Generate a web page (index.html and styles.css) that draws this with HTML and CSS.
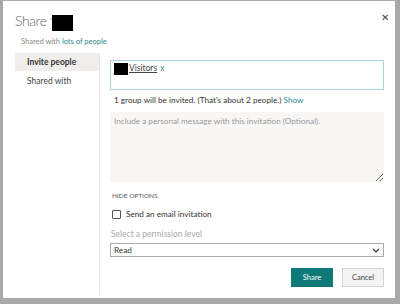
FILE: index.html
```html
<!DOCTYPE html>
<html lang="en">
<head>
    <meta charset="UTF-8">
    <title>Share</title>
    <link rel="stylesheet" href="styles.css">
</head>
<body>
    <div class="dialog">
        <!-- header -->
        <div class="header">
            <h1 class="title">Share <span class="tick">'</span><span class="redact title-redact"></span></h1>
            <span class="close">&#x2715;</span>
        </div>
        <p class="subtitle">Shared with <a class="link">lots of people</a></p>

        <div class="body">
            <!-- left nav -->
            <div class="nav">
                <div class="nav-item active">Invite people</div>
                <div class="nav-item">Shared with</div>
            </div>

            <!-- right content -->
            <div class="main">
                <div class="people-box">
                    <span class="redact chip-redact"></span><span class="chip">Visitors</span> <span class="chip-x">x</span>
                </div>
                <p class="invite-info">1 group will be invited. (That's about 2 people.) <a class="link">Show</a></p>
                <textarea class="message" placeholder="Include a personal message with this invitation (Optional)."></textarea>

                <div class="options-toggle">HIDE OPTIONS</div>
                <label class="check-row">
                    <span class="checkbox"></span>
                    Send an email invitation
                </label>
                <div class="perm-label">Select a permission level</div>
                <div class="select">
                    <span>Read</span>
                    <svg class="chevron" width="8" height="5" viewBox="0 0 8 5"><path d="M1 1 L4 4 L7 1" fill="none" stroke="#333" stroke-width="1.2"/></svg>
                </div>

                <div class="buttons">
                    <button class="btn btn-primary">Share</button>
                    <button class="btn">Cancel</button>
                </div>
            </div>
        </div>
    </div>
</body>
</html>
```

FILE: styles.css
```css
* {
    margin: 0;
    padding: 0;
    box-sizing: border-box;
}

body {
    font-family: Lato, "Open Sans", sans-serif;
    background-color: #a9a9a9;
    padding: 1px 5px 6px 3px;
    width: 400px;
    height: 304px;
    overflow: hidden;
}

.dialog {
    background-color: #ffffff;
    height: 297px;
    padding: 9px 11px 0 12px;
    display: flex;
    flex-direction: column;
}

.header {
    display: flex;
    justify-content: space-between;
    align-items: flex-start;
}

.title {
    font-weight: 300;
    font-size: 14px;
    letter-spacing: -0.4px;
    color: #666;
    display: flex;
    align-items: center;
    gap: 0;
    line-height: 22px;
}

.tick {
    font-size: 10px;
    color: #666;
    margin-left: 3px;
    margin-right: 1px;
}

.redact {
    display: inline-block;
    background-color: #000;
}

.title-redact {
    width: 21px;
    height: 16px;
    margin-top: 3px;
}

.close {
    font-size: 10px;
    color: #444;
    margin-top: 1px;
    margin-right: -5px;
}

.subtitle {
    font-size: 7.5px;
    color: #888;
    margin-top: 5px;
    margin-left: 6px;
}

.link {
    color: #2b8a8e;
    text-decoration: none;
}

.body {
    display: flex;
    flex: 1;
    margin-top: 7px;
    padding-bottom: 4px;
}

.nav {
    width: 85px;
    border-right: 1px solid #e6e6e6;
    font-size: 8.5px;
    color: #444;
}

.nav-item {
    padding: 4px 0 3px 12px;
    height: 18px;
    margin-bottom: 1px;
}

.nav-item.active {
    background-color: #f0eeec;
    color: #333;
    font-weight: 700;
}

.main {
    flex: 1;
    padding: 7px 0 0 10px;
    display: flex;
    flex-direction: column;
}

.people-box {
    height: 30px;
    border: 1px solid #a6d8da;
    padding: 2px 3px;
    font-size: 8.5px;
    color: #333;
    display: flex;
    align-items: flex-start;
}

.chip-redact {
    width: 14px;
    height: 12px;
}

.chip {
    text-decoration: underline;
    color: #444;
    margin-left: 1px;
}

.chip-x {
    color: #2b8a8e;
    margin-left: 3px;
}

.invite-info {
    font-size: 8.2px;
    color: #333;
    margin: 4px 0 0 4px;
    line-height: 12px;
}

.message {
    margin-top: 6px;
    height: 70px;
    border: none;
    background-color: #f8f7f6;
    font-family: inherit;
    font-size: 8.2px;
    padding: 4px 4px;
    resize: vertical;
    color: #333;
}

.message::placeholder {
    color: #999;
}

.options-toggle {
    font-size: 6.5px;
    color: #555;
    margin: 10px 0 0 2px;
}

.check-row {
    display: flex;
    align-items: center;
    gap: 5px;
    font-size: 8.2px;
    color: #333;
    margin: 10px 0 0 2px;
}

.checkbox {
    width: 9px;
    height: 9px;
    border: 1px solid #555;
    border-radius: 1px;
}

.perm-label {
    font-size: 8.5px;
    color: #aaa;
    margin: 10px 0 0 1px;
}

.select {
    margin-top: 4px;
    height: 14px;
    border: 1px solid #aaa;
    font-size: 8.2px;
    color: #333;
    padding: 0 3px;
    display: flex;
    justify-content: space-between;
    align-items: center;
}

.buttons {
    display: flex;
    justify-content: flex-end;
    gap: 9px;
    margin-top: 11px;
}

.btn {
    width: 42px;
    height: 19px;
    font-family: inherit;
    font-size: 7.5px;
    border: 1px solid #d4d4d4;
    background-color: #f4f4f4;
    color: #444;
}

.btn-primary {
    background-color: #0e7a78;
    border-color: #0e7a78;
    color: #fff;
}
```
